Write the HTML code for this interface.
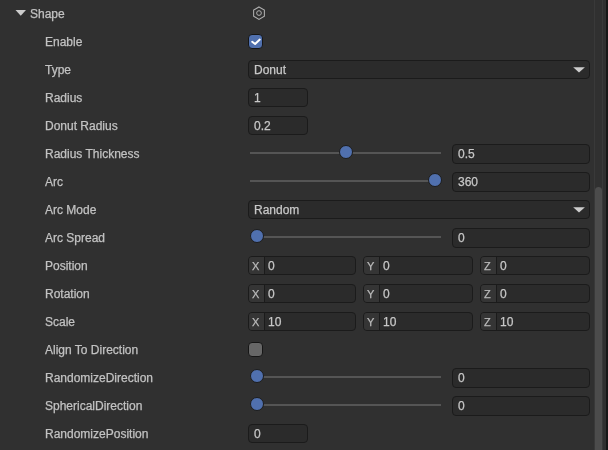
<!DOCTYPE html>
<html><head><meta charset="utf-8">
<style>
*{box-sizing:border-box;margin:0;padding:0}
html,body{width:608px;height:450px;overflow:hidden;background:#303030;-webkit-font-smoothing:antialiased;font-family:"Liberation Sans",sans-serif;font-size:12px;color:#cccccc}
.a{position:absolute}
.lbl,.inp,.vec{will-change:transform;-webkit-text-stroke:0.25px}
.lbl{position:absolute;left:45px;height:28px;line-height:28px;white-space:nowrap;color:#c2c2c2}
.inp{position:absolute;height:19px;background:#2b2b2b;border:1px solid #1b1b1b;border-radius:4px;line-height:18px;padding-left:5px;color:#c8c8c8;white-space:nowrap}
.track{position:absolute;left:250px;width:191px;height:2px;background:#555555}
.thumb{position:absolute;width:14px;height:14px;border-radius:50%;background:#5070ae;border:1px solid #1c1c1c}
.vec{position:absolute;height:19px;background:#2b2b2b;border:1px solid #1b1b1b;border-radius:4px;overflow:hidden}
.vec .k{position:absolute;left:0;top:0;width:16px;height:17px;background:#353535;border-right:1px solid #1b1b1b;line-height:18px;padding-left:3px;font-size:11px;color:#bbbbbb}
.vec .v{position:absolute;left:19px;top:0;line-height:18px;color:#c8c8c8}
</style></head><body>

<!-- header -->
<svg class="a" style="left:15px;top:10px" width="12" height="6" viewBox="0 0 12 6"><path d="M0.5 0 L11 0 L5.75 5.8 Z" fill="#cccccc"/></svg>
<div class="lbl" style="left:30px;top:0">Shape</div>
<svg class="a" style="left:252px;top:5px" width="14" height="16" viewBox="0 0 14 16"><path d="M7 1.95 L12.37 5.05 L12.37 11.25 L7 14.35 L1.63 11.25 L1.63 5.05 Z" fill="none" stroke="#b0b0b0" stroke-width="1.05"/><circle cx="7" cy="8.05" r="2.35" fill="none" stroke="#b0b0b0" stroke-width="1"/></svg>

<div class="lbl" style="top:28px">Enable</div>
<div class="a" style="left:248px;top:34px;width:15px;height:15px;border-radius:4px;background:#5070ae;border:1px solid #161616"></div>
<svg class="a" style="left:248px;top:34px" width="15" height="15" viewBox="0 0 15 15"><path d="M4.2 7.8 L7.1 10.0 L11.8 5.6" fill="none" stroke="#ffffff" stroke-width="2" stroke-linecap="round" stroke-linejoin="round"/></svg>

<div class="lbl" style="top:56px">Type</div>
<div class="inp" style="left:248px;top:60px;width:342px">Donut</div>
<svg class="a" style="left:573px;top:67px" width="12" height="6" viewBox="0 0 12 6"><path d="M0.2 0.3 L11.9 0.3 L6 5.6 Z" fill="#cdcdcd"/></svg>

<div class="lbl" style="top:84px">Radius</div>
<div class="inp" style="left:248px;top:88px;width:60px">1</div>

<div class="lbl" style="top:112px">Donut Radius</div>
<div class="inp" style="left:248px;top:116px;width:60px">0.2</div>

<div class="lbl" style="top:140px">Radius Thickness</div>
<div class="track" style="top:152px"></div>
<div class="thumb" style="left:339px;top:145px"></div>
<div class="inp" style="left:452px;height:20px;top:144px;width:138px">0.5</div>

<div class="lbl" style="top:168px">Arc</div>
<div class="track" style="top:180px"></div>
<div class="thumb" style="left:428px;top:173px"></div>
<div class="inp" style="left:452px;height:20px;top:172px;width:138px">360</div>

<div class="lbl" style="top:196px">Arc Mode</div>
<div class="inp" style="left:248px;top:200px;width:342px">Random</div>
<svg class="a" style="left:573px;top:207px" width="12" height="6" viewBox="0 0 12 6"><path d="M0.2 0.3 L11.9 0.3 L6 5.6 Z" fill="#cdcdcd"/></svg>

<div class="lbl" style="top:224px">Arc Spread</div>
<div class="track" style="top:236px"></div>
<div class="thumb" style="left:250px;top:229px"></div>
<div class="inp" style="left:452px;height:20px;top:228px;width:138px">0</div>

<div class="lbl" style="top:252px">Position</div>
<div class="vec" style="left:248px;top:256px;width:108px"><div class="k">X</div><div class="v">0</div></div>
<div class="vec" style="left:363px;top:256px;width:110px"><div class="k">Y</div><div class="v">0</div></div>
<div class="vec" style="left:480px;top:256px;width:110px"><div class="k">Z</div><div class="v">0</div></div>

<div class="lbl" style="top:280px">Rotation</div>
<div class="vec" style="left:248px;top:284px;width:108px"><div class="k">X</div><div class="v">0</div></div>
<div class="vec" style="left:363px;top:284px;width:110px"><div class="k">Y</div><div class="v">0</div></div>
<div class="vec" style="left:480px;top:284px;width:110px"><div class="k">Z</div><div class="v">0</div></div>

<div class="lbl" style="top:308px">Scale</div>
<div class="vec" style="left:248px;top:312px;width:108px"><div class="k">X</div><div class="v">10</div></div>
<div class="vec" style="left:363px;top:312px;width:110px"><div class="k">Y</div><div class="v">10</div></div>
<div class="vec" style="left:480px;top:312px;width:110px"><div class="k">Z</div><div class="v">10</div></div>

<div class="lbl" style="top:336px">Align To Direction</div>
<div class="a" style="left:248px;top:342px;width:15px;height:15px;border-radius:4px;background:#676767;border:1px solid #161616"></div>

<div class="lbl" style="top:364px">RandomizeDirection</div>
<div class="track" style="top:376px"></div>
<div class="thumb" style="left:250px;top:369px"></div>
<div class="inp" style="left:452px;height:20px;top:368px;width:138px">0</div>

<div class="lbl" style="top:392px">SphericalDirection</div>
<div class="track" style="top:404px"></div>
<div class="thumb" style="left:250px;top:397px"></div>
<div class="inp" style="left:452px;height:20px;top:396px;width:138px">0</div>

<div class="lbl" style="top:420px">RandomizePosition</div>
<div class="inp" style="left:248px;top:424px;width:60px">0</div>

<!-- scrollbar -->
<div class="a" style="left:594px;top:0;width:9px;height:450px;background:#303030;border-left:1px solid #393939;border-right:1px solid #393939"></div>
<div class="a" style="left:595px;top:187px;width:7px;height:263px;background:#4c4c4c;border-radius:4px 4px 0 0"></div>
<div class="a" style="left:606px;top:0;width:2px;height:450px;background:#171717"></div>
</body></html>
